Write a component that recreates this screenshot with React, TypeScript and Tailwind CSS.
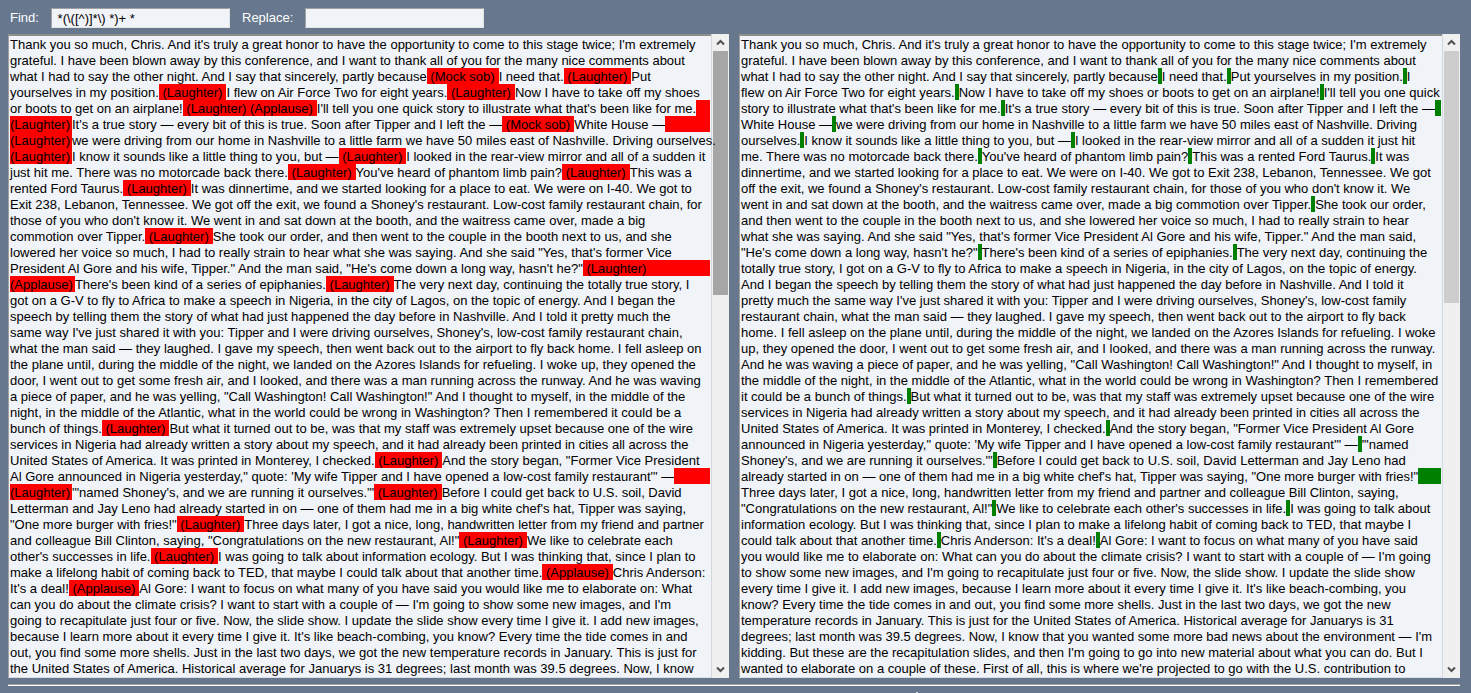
import React from "react";

// Text between { and } is highlighted; a line ending in "}>" carries its highlight to the right edge.
const SOURCE_LINES: string[] = [
  "Thank you so much, Chris. And it's truly a great honor to have the opportunity to come to this stage twice; I'm extremely",
  "grateful. I have been blown away by this conference, and I want to thank all of you for the many nice comments about",
  "what I had to say the other night. And I say that sincerely, partly because{ (Mock sob) }I need that.{ (Laughter) }Put",
  "yourselves in my position.{ (Laughter) }I flew on Air Force Two for eight years.{ (Laughter) }Now I have to take off my shoes",
  "or boots to get on an airplane!{ (Laughter) (Applause) }I'll tell you one quick story to illustrate what that's been like for me.{ }>",
  "{(Laughter) }It's a true story — every bit of this is true. Soon after Tipper and I left the —{ (Mock sob) }White House —{ }>",
  "{(Laughter) }we were driving from our home in Nashville to a little farm we have 50 miles east of Nashville. Driving ourselves.{ }>",
  "{(Laughter) }I know it sounds like a little thing to you, but —{ (Laughter) }I looked in the rear-view mirror and all of a sudden it",
  "just hit me. There was no motorcade back there.{ (Laughter) }You've heard of phantom limb pain?{ (Laughter) }This was a",
  "rented Ford Taurus.{ (Laughter) }It was dinnertime, and we started looking for a place to eat. We were on I-40. We got to",
  "Exit 238, Lebanon, Tennessee. We got off the exit, we found a Shoney's restaurant. Low-cost family restaurant chain, for",
  "those of you who don't know it. We went in and sat down at the booth, and the waitress came over, made a big",
  "commotion over Tipper.{ (Laughter) }She took our order, and then went to the couple in the booth next to us, and she",
  "lowered her voice so much, I had to really strain to hear what she was saying. And she said \"Yes, that's former Vice",
  "President Al Gore and his wife, Tipper.\" And the man said, \"He's come down a long way, hasn't he?\"{ (Laughter) }>",
  "{(Applause) }There's been kind of a series of epiphanies.{ (Laughter) }The very next day, continuing the totally true story, I",
  "got on a G-V to fly to Africa to make a speech in Nigeria, in the city of Lagos, on the topic of energy. And I began the",
  "speech by telling them the story of what had just happened the day before in Nashville. And I told it pretty much the",
  "same way I've just shared it with you: Tipper and I were driving ourselves, Shoney's, low-cost family restaurant chain,",
  "what the man said — they laughed. I gave my speech, then went back out to the airport to fly back home. I fell asleep on",
  "the plane until, during the middle of the night, we landed on the Azores Islands for refueling. I woke up, they opened the",
  "door, I went out to get some fresh air, and I looked, and there was a man running across the runway. And he was waving",
  "a piece of paper, and he was yelling, \"Call Washington! Call Washington!\" And I thought to myself, in the middle of the",
  "night, in the middle of the Atlantic, what in the world could be wrong in Washington? Then I remembered it could be a",
  "bunch of things.{ (Laughter) }But what it turned out to be, was that my staff was extremely upset because one of the wire",
  "services in Nigeria had already written a story about my speech, and it had already been printed in cities all across the",
  "United States of America. It was printed in Monterey, I checked.{ (Laughter) }And the story began, \"Former Vice President",
  "Al Gore announced in Nigeria yesterday,\" quote: 'My wife Tipper and I have opened a low-cost family restaurant'\" —{ }>",
  "{(Laughter) }'\"named Shoney's, and we are running it ourselves.'\"{ (Laughter) }Before I could get back to U.S. soil, David",
  "Letterman and Jay Leno had already started in on — one of them had me in a big white chef's hat, Tipper was saying,",
  "\"One more burger with fries!\"{ (Laughter) }Three days later, I got a nice, long, handwritten letter from my friend and partner",
  "and colleague Bill Clinton, saying, \"Congratulations on the new restaurant, Al!\"{ (Laughter) }We like to celebrate each",
  "other's successes in life.{ (Laughter) }I was going to talk about information ecology. But I was thinking that, since I plan to",
  "make a lifelong habit of coming back to TED, that maybe I could talk about that another time.{ (Applause) }Chris Anderson:",
  "It's a deal!{ (Applause) }Al Gore: I want to focus on what many of you have said you would like me to elaborate on: What",
  "can you do about the climate crisis? I want to start with a couple of — I'm going to show some new images, and I'm",
  "going to recapitulate just four or five. Now, the slide show. I update the slide show every time I give it. I add new images,",
  "because I learn more about it every time I give it. It's like beach-combing, you know? Every time the tide comes in and",
  "out, you find some more shells. Just in the last two days, we got the new temperature records in January. This is just for",
  "the United States of America. Historical average for Januarys is 31 degrees; last month was 39.5 degrees. Now, I know",
];

const RESULT_LINES: string[] = [
  "Thank you so much, Chris. And it's truly a great honor to have the opportunity to come to this stage twice; I'm extremely",
  "grateful. I have been blown away by this conference, and I want to thank all of you for the many nice comments about",
  "what I had to say the other night. And I say that sincerely, partly because{ }I need that.{ }Put yourselves in my position.{ }I",
  "flew on Air Force Two for eight years.{ }Now I have to take off my shoes or boots to get on an airplane!{ }I'll tell you one quick",
  "story to illustrate what that's been like for me.{ }It's a true story — every bit of this is true. Soon after Tipper and I left the —{ }>",
  "White House —{ }we were driving from our home in Nashville to a little farm we have 50 miles east of Nashville. Driving",
  "ourselves.{ }I know it sounds like a little thing to you, but —{ }I looked in the rear-view mirror and all of a sudden it just hit",
  "me. There was no motorcade back there.{ }You've heard of phantom limb pain?{ }This was a rented Ford Taurus.{ }It was",
  "dinnertime, and we started looking for a place to eat. We were on I-40. We got to Exit 238, Lebanon, Tennessee. We got",
  "off the exit, we found a Shoney's restaurant. Low-cost family restaurant chain, for those of you who don't know it. We",
  "went in and sat down at the booth, and the waitress came over, made a big commotion over Tipper.{ }She took our order,",
  "and then went to the couple in the booth next to us, and she lowered her voice so much, I had to really strain to hear",
  "what she was saying. And she said \"Yes, that's former Vice President Al Gore and his wife, Tipper.\" And the man said,",
  "\"He's come down a long way, hasn't he?\"{ }There's been kind of a series of epiphanies.{ }The very next day, continuing the",
  "totally true story, I got on a G-V to fly to Africa to make a speech in Nigeria, in the city of Lagos, on the topic of energy.",
  "And I began the speech by telling them the story of what had just happened the day before in Nashville. And I told it",
  "pretty much the same way I've just shared it with you: Tipper and I were driving ourselves, Shoney's, low-cost family",
  "restaurant chain, what the man said — they laughed. I gave my speech, then went back out to the airport to fly back",
  "home. I fell asleep on the plane until, during the middle of the night, we landed on the Azores Islands for refueling. I woke",
  "up, they opened the door, I went out to get some fresh air, and I looked, and there was a man running across the runway.",
  "And he was waving a piece of paper, and he was yelling, \"Call Washington! Call Washington!\" And I thought to myself, in",
  "the middle of the night, in the middle of the Atlantic, what in the world could be wrong in Washington? Then I remembered",
  "it could be a bunch of things.{ }But what it turned out to be, was that my staff was extremely upset because one of the wire",
  "services in Nigeria had already written a story about my speech, and it had already been printed in cities all across the",
  "United States of America. It was printed in Monterey, I checked.{ }And the story began, \"Former Vice President Al Gore",
  "announced in Nigeria yesterday,\" quote: 'My wife Tipper and I have opened a low-cost family restaurant'\" —{ }'\"named",
  "Shoney's, and we are running it ourselves.'\"{ }Before I could get back to U.S. soil, David Letterman and Jay Leno had",
  "already started in on — one of them had me in a big white chef's hat, Tipper was saying, \"One more burger with fries!\"{ }>",
  "Three days later, I got a nice, long, handwritten letter from my friend and partner and colleague Bill Clinton, saying,",
  "\"Congratulations on the new restaurant, Al!\"{ }We like to celebrate each other's successes in life.{ }I was going to talk about",
  "information ecology. But I was thinking that, since I plan to make a lifelong habit of coming back to TED, that maybe I",
  "could talk about that another time.{ }Chris Anderson: It's a deal!{ }Al Gore: I want to focus on what many of you have said",
  "you would like me to elaborate on: What can you do about the climate crisis? I want to start with a couple of — I'm going",
  "to show some new images, and I'm going to recapitulate just four or five. Now, the slide show. I update the slide show",
  "every time I give it. I add new images, because I learn more about it every time I give it. It's like beach-combing, you",
  "know? Every time the tide comes in and out, you find some more shells. Just in the last two days, we got the new",
  "temperature records in January. This is just for the United States of America. Historical average for Januarys is 31",
  "degrees; last month was 39.5 degrees. Now, I know that you wanted some more bad news about the environment — I'm",
  "kidding. But these are the recapitulation slides, and then I'm going to go into new material about what you can do. But I",
  "wanted to elaborate on a couple of these. First of all, this is where we're projected to go with the U.S. contribution to",
];

function markSize(content: string, grow: boolean, first: boolean) {
  if (grow) return "min-w-0 flex-1";
  if (!content) return "w-1 shrink-0";
  return first ? "shrink-0 pr-0.5" : "shrink-0 pr-1";
}

function Line({ text, markClass }: { text: string; markClass: string }) {
  const fills = text.endsWith(">");
  const parts = (fills ? text.slice(0, -1) : text).split(/(\{[^}]*\})/).filter(Boolean);
  return (
    <div className="flex h-4 leading-[18px] whitespace-pre">
      {parts.map((part, i) => {
        if (!part.startsWith("{")) return <span key={i} className="shrink-0">{part}</span>;
        const content = part.slice(1, -1).trimEnd();
        const size = markSize(content, fills && i === parts.length - 1, i === 0);
        return (
          <mark key={i} className={`${markClass} text-black ${size}`}>
            {content}
          </mark>
        );
      })}
    </div>
  );
}

function Arrow({ up }: { up: boolean }) {
  return (
    <svg width="9" height="7" viewBox="0 0 9 7" fill="none" stroke="#505050" strokeWidth="2">
      <path d={up ? "M1 5.5 4.5 2 8 5.5" : "M1 1.5 4.5 5 8 1.5"} />
    </svg>
  );
}

function Pane(props: { label: string; lines: string[]; markClass: string; thumbClass: string }) {
  return (
    <section aria-label={props.label} className="flex min-w-0 bg-[#f0f3f8]">
      <div className="relative min-w-0 flex-1 border-t-2 border-b border-l border-t-[#8d8d8d] border-b-[#dcdfe4] border-l-[#a0a0a0] px-px pb-px">
        {props.lines.map((line, i) => (
          <Line key={i} text={line} markClass={props.markClass} />
        ))}
      </div>
      <div className="flex w-[18px] shrink-0 flex-col border-l border-[#d4d7dc] bg-[#f0f0f0] px-px">
        <button type="button" aria-label="Scroll up" className="flex h-[17px] items-center justify-center">
          <Arrow up />
        </button>
        <div className={props.thumbClass} />
        <button type="button" aria-label="Scroll down" className="mt-auto flex h-[17px] items-center justify-center">
          <Arrow up={false} />
        </button>
      </div>
    </section>
  );
}

const INPUT =
  "h-5 w-[179px] border-t border-l border-r border-b border-t-[#a0a0a0] border-l-[#a0a0a0] border-r-[#e3e3e3] border-b-[#e3e3e3] bg-[#f0f3f8] px-0.5 text-black outline-none";

export default function App() {
  return (
    <main className="min-h-screen overflow-hidden bg-[#66778e] pt-2 pr-[11px] pl-2 font-['Liberation_Sans',Arial,sans-serif] text-[13px] leading-4 text-black">
      <form className="flex items-center" onSubmit={(e) => e.preventDefault()}>
        <label htmlFor="find" className="w-[43px] pl-0.5 text-white">Find:</label>
        <input id="find" className={INPUT} defaultValue={" *(\\([^)]*\\) *)+ *"} spellCheck={false} />
        <label htmlFor="replace" className="ml-3 w-[63px] text-white">Replace:</label>
        <input id="replace" className={INPUT} defaultValue="" />
      </form>
      <div className="mt-1.5 grid grid-cols-2 gap-2.5">
        <Pane
          label="Matches"
          lines={SOURCE_LINES}
          markClass="bg-[#ff0000]"
          thumbClass="h-[244px] bg-[#a6a6a6]"
        />
        <Pane
          label="Result"
          lines={RESULT_LINES}
          markClass="bg-[#008000]"
          thumbClass="h-[252px] bg-[#cdcdcd]"
        />
      </div>
      <hr className="mt-1.5 h-0.5 border-t border-b border-t-[#a0a0a0] border-b-white" />
      <div className="ml-[62.5%] mt-1.5 h-px w-0.5 bg-[#d8dde4]" />
    </main>
  );
}
